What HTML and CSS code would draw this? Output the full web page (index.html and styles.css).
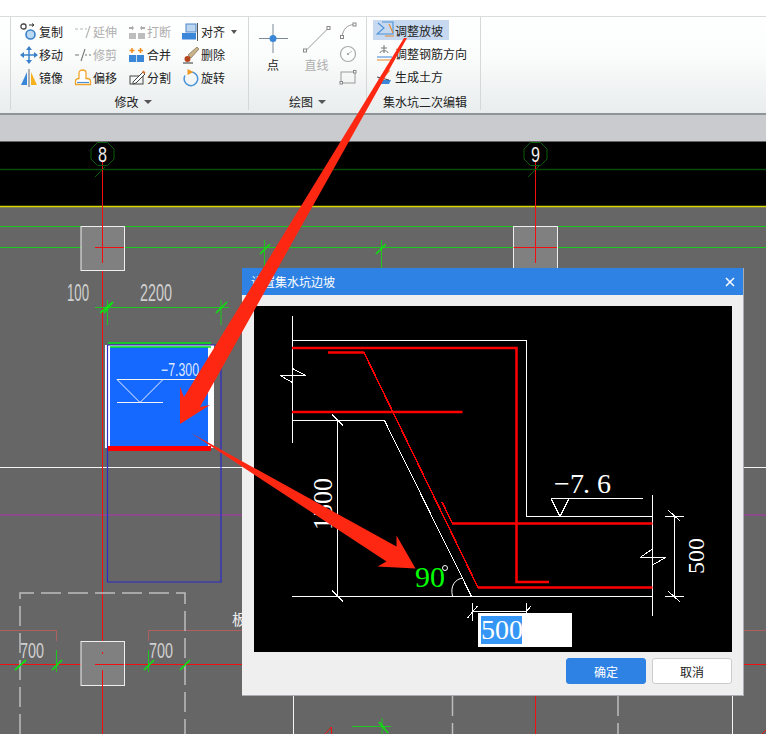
FILE: index.html
```html
<!DOCTYPE html>
<html lang="zh">
<head>
<meta charset="utf-8">
<title>设置集水坑边坡</title>
<link rel="stylesheet" href="styles.css">
</head>
<body>
<div class="app">
  <div class="topbar"></div>
  <div class="ribbon">
    <section class="group group-modify">
      <div class="tools">
        <div class="tool"><svg class="ico" viewBox="0 0 18 18"><rect x="1" y="1" width="5" height="5" rx="2" fill="none" stroke="#444" stroke-width="1.3"/><path d="M9 2h5M14 2l-2-1.500M14 2l-2 1.500" fill="none" stroke="#333"/><circle cx="10.500" cy="11.500" r="4.500" fill="#bcd9f2" stroke="#3a80c8" stroke-width="1.600"/></svg><span>复制</span></div>
        <div class="tool off"><svg class="ico" viewBox="0 0 18 18"><path d="M1 6h3M6 6h3M11 6h2M16 3l-4 12" fill="none" stroke="#b5b5b5" stroke-width="1.200"/></svg><span>延伸</span></div>
        <div class="tool off"><svg class="ico" viewBox="0 0 18 18"><rect x="1" y="10" width="7" height="6" fill="#bdbdbd"/><rect x="10" y="10" width="7" height="6" fill="#bdbdbd"/><path d="M1 5h3M14 5h3" stroke="#aaa" stroke-width="2"/><path d="M6 5L4 2.500v5zM12 5l2-2.500v5z" fill="#aaa"/></svg><span>打断</span></div>
        <div class="tool"><svg class="ico" viewBox="0 0 18 18"><rect x="4" y="1" width="10" height="8" fill="#bcd5f0" stroke="#4a86c6"/><rect x="0" y="10" width="14" height="6.500" fill="#3a86d8"/><path d="M15.500 0v18" stroke="#555"/></svg><span>对齐</span><i class="caret"></i></div>

        <div class="tool"><svg class="ico" viewBox="0 0 18 18"><path d="M9 3v12M3 9h12" stroke="#3c84cc" stroke-width="1.500"/><path d="M9 0l3 4H6zM9 18l3-4H6zM0 9l4-3v6zM18 9l-4-3v6z" fill="#3a80c8"/></svg><span>移动</span></div>
        <div class="tool off"><svg class="ico" viewBox="0 0 18 18"><path d="M1 9h4M7 15l4-12M11 9h2M15 9h2" fill="none" stroke="#777" stroke-width="1.100"/></svg><span>修剪</span></div>
        <div class="tool"><svg class="ico" viewBox="0 0 18 18"><rect x="1" y="9" width="15" height="7" fill="#3a86d8"/><path d="M8.500 9v7" stroke="#cde"/><path d="M4 2v5M1.500 4.500h5M12.500 2v5M10 4.500h5" stroke="#ee8c1c" stroke-width="1.500"/></svg><span>合并</span></div>
        <div class="tool"><svg class="ico" viewBox="0 0 18 18"><path d="M1 17h10" stroke="#333"/><path d="M6 9l9-8 2 2-8 9z" fill="#c9b48e" stroke="#6e5a3e" stroke-width=".6"/><circle cx="5.500" cy="13" r="3" fill="#b5451c"/></svg><span>删除</span></div>

        <div class="tool"><svg class="ico" viewBox="0 0 18 18"><path d="M7 3v13H1z" fill="#3a86d8"/><path d="M11 3v13h6z" fill="#f6b21e"/><path d="M9 0v18" stroke="#666"/></svg><span>镜像</span></div>
        <div class="tool"><svg class="ico" viewBox="0 0 18 18"><path d="M1.500 15.500v-3c0-2 1.500-3 3.500-3V4c0-4 7-4 7 0v5.500h1c2.500 0 3.500 1.500 3.500 3v3z" fill="#fff" stroke="#f0a52a" stroke-width="1.300"/><path d="M3 13.500h12" stroke="#4a90d8" stroke-width="1.200"/></svg><span>偏移</span></div>
        <div class="tool"><svg class="ico" viewBox="0 0 18 18"><rect x="2" y="7" width="13" height="8" fill="none" stroke="#444"/><path d="M5 13L15 3l2 2-9 9-3 1z" fill="#fff" stroke="#444"/><path d="M14 3l1.500-1.500 2 2L16 5z" fill="#e0762c"/></svg><span>分割</span></div>
        <div class="tool"><svg class="ico" viewBox="0 0 18 18"><path d="M9 3a6.800 6.800 0 1 1-6 3.500" fill="none" stroke="#4a92da" stroke-width="1.500"/><path d="M5.500 0v6l6-3z" fill="#f09a26"/></svg><span>旋转</span></div>
      </div>
      <div class="group-title">修改<i class="caret caret-title"></i></div>
    </section>

    <section class="group group-draw">
      <div class="draw-tools">
        <div class="draw-big">
          <svg class="big-ico" viewBox="0 0 30 30"><path d="M15 0v29M1 14.500h29" stroke="#7a8a96"/><circle cx="15" cy="14.500" r="3.500" fill="#3a86d8"/></svg>
          <span>点</span>
        </div>
        <div class="draw-big off">
          <svg class="big-ico" viewBox="0 0 30 30"><path d="M3.500 27L26.500 4" stroke="#9a9a9a"/><rect x="1.500" y="25" width="3" height="3" fill="#fff" stroke="#888"/><rect x="25" y="2.500" width="3" height="3" fill="#fff" stroke="#888"/></svg>
          <span>直线</span>
        </div>
        <div class="draw-small">
          <svg class="small-ico" viewBox="0 0 18 18"><path d="M3 15C4 7 8 3 15 2.500" fill="none" stroke="#999"/><rect x="1.500" y="13.500" width="3" height="3" fill="#fff" stroke="#888"/><rect x="14" y="1" width="3" height="3" fill="#fff" stroke="#888"/></svg>
          <svg class="small-ico" viewBox="0 0 18 18"><circle cx="9" cy="9" r="7.500" fill="none" stroke="#aaa" stroke-width="1.200"/><circle cx="9" cy="9" r="1" fill="#888"/><path d="M9 9l4-3" stroke="#bbb"/></svg>
          <svg class="small-ico" viewBox="0 0 18 18"><rect x="2" y="4" width="14" height="11" fill="none" stroke="#999"/><rect x="1" y="13.500" width="2.500" height="2.500" fill="#fff" stroke="#888"/><rect x="14.500" y="2.500" width="2.500" height="2.500" fill="#fff" stroke="#888"/></svg>
        </div>
      </div>
      <div class="group-title">绘图<i class="caret caret-title"></i></div>
    </section>

    <section class="group group-pit">
      <div class="pit-tools">
        <div class="pit-tool active"><svg class="ico" viewBox="0 0 18 18"><path d="M6 1h11v12H1l7-6-6-5" fill="none" stroke="#4a90d8" stroke-width="1.100"/><path d="M9 15h9M13 3l4 9" fill="none" stroke="#e88a2c" stroke-width="1.100"/></svg><span>调整放坡</span></div>
        <div class="pit-tool"><svg class="ico" viewBox="0 0 18 18"><path d="M8 1v8M5 4h6M4 9c0-3 8-3 8 0" fill="none" stroke="#777"/><path d="M1 13h15" stroke="#3a86d8"/><path d="M1 16h15" stroke="#e88a2c"/></svg><span>调整钢筋方向</span></div>
        <div class="pit-tool"><svg class="ico" viewBox="0 0 18 18"><path d="M12 1L4 11l2 2L14 4z" fill="#e8892a"/><path d="M2 11v2h13l-2 4H4z" fill="#3a86d8"/><path d="M1 10l12 3" stroke="#444"/></svg><span>生成土方</span></div>
      </div>
      <div class="group-title">集水坑二次编辑</div>
    </section>
  </div>
  <div class="band"></div>

  <main class="canvas">
    <svg class="cad" viewBox="0 141 766 593" width="766" height="593">
      <rect x="0" y="141" width="766" height="593" fill="#666"/>
      <rect x="0" y="142" width="766" height="64" fill="#000"/>
      <path class="dark-green thick" d="M0 169.500H766"/>
      <path class="yellow" d="M0 206.500H766"/>
      <path class="green" d="M0 226.500H766"/>
      <path class="green" d="M0 247.500H766"/>
      <path class="white-thin" d="M0 467.500H766"/>
      <path class="magenta" d="M0 515H766"/>
      <path class="brown" d="M0 630.500H56.500V641M148.500 641V630.500H766"/>
      <path class="red" d="M102.500 160V734M535.500 160V734M0 664.500H766"/>
      <path class="green" d="M264.500 240V268M381.500 240V268"/>
      <path class="slash" d="M260 254L270 244M376 254L386 244"/>

      <path class="dark-green" d="M97.500 142.500L107.500 142.500L114 149L114 159L107.500 165.500L97.500 165.500L91 159L91 149Z M95 177L105 167"/>
      <path class="dark-green" d="M530.500 142.500L540.500 142.500L547 149L547 159L540.500 165.500L530.500 165.500L524 159L524 149Z M528 177L539 166"/>
      <text class="axis" x="98" y="162" textLength="9" lengthAdjust="spacingAndGlyphs">8</text>
      <text class="axis" x="531" y="162" textLength="9" lengthAdjust="spacingAndGlyphs">9</text>

      <rect class="column" x="81" y="226.500" width="43.500" height="44"/>
      <rect class="column" x="513.500" y="226.500" width="44" height="44"/>
      <rect class="column" x="81" y="641.500" width="43.500" height="44"/>
      <path class="red" d="M95 247.500H124M102.500 226V263M513.500 247.500H557M535.500 226V263M95 664.500H124M102.500 670V686M102.500 652V654"/>

      <text class="dim" x="67" y="301" textLength="22" lengthAdjust="spacingAndGlyphs">100</text>
      <text class="dim" x="140" y="301" textLength="32" lengthAdjust="spacingAndGlyphs">2200</text>
      <path class="green" d="M95 307.500H229M107.500 300V325M221 300V325"/>
      <path class="slash" d="M100 313L113 302M104 313L113 302M216 313L227 302"/>

      <rect x="105" y="345" width="109" height="103" fill="#fff"/>
      <rect x="110" y="347" width="98" height="99" fill="#1569ff"/>
      <path class="navy" d="M107.500 345V582H221V345H108"/>
      <path class="lime" d="M108 343H211M110 347H211"/>
      <path d="M108 448.500H211" stroke="#f00" stroke-width="5"/>
      <text class="level" x="161" y="376" textLength="38" lengthAdjust="spacingAndGlyphs">−7.300</text>
      <path class="white-thin" d="M117 379.500H195M117 379.500L140 402.500L163 379.500M117 402.500H163"/>

      <path class="dash" d="M20 734V593H185V734"/>
      <text class="dim small" x="20" y="658" textLength="24" lengthAdjust="spacingAndGlyphs">700</text>
      <text class="dim small" x="149" y="658" textLength="24" lengthAdjust="spacingAndGlyphs">700</text>
      <path class="green" d="M56.500 650V672M148.500 650V672"/>
      <path class="slash" d="M15 670L26 660M52 670L62 660M144 670L154 660M180 670L190 660"/>
      <text class="note" x="232" y="625">板</text>

      <path class="white-thin" d="M293.500 696V734M732.500 696V734"/>
      <path class="dash" d="M618 696V734M452.500 696V734"/>
      <path class="green" d="M352 726.500H391M382 718V734"/>
      <path class="slash" d="M379 722L388 733"/>
      <path class="red" d="M325 734L331.500 727V734M762 734L766 730"/>
    </svg>

    <div class="dialog">
      <header class="dialog-title"><span>设置集水坑边坡</span>
        <svg class="close" viewBox="0 0 10 10"><path d="M1 1l8 8M9 1l-8 8" stroke="#fff" stroke-width="1.500"/></svg>
      </header>
      <div class="dialog-body">
        <div class="drawing">
          <svg class="detail" viewBox="254 306 478 346" width="478" height="346">
            <rect x="254" y="306" width="478" height="346" fill="#000"/>
            <path class="w" d="M292.500 316V443M292.500 340.500H526.500V516.500H652.500M280 375.500H305.500L292.500 368.500M280 375.500L292.500 382.500"/>
            <path class="w" d="M292.500 420.500H384.500L471.500 596.500M337.500 420.500V596.500M332 414.500L343 425.500M332 590.500L343 601.500M292 596.500H652.500"/>
            <path class="w" d="M551 498.500H642.500M551 498.500L560 516.500L569 498.500M652.500 495V616M640 557.500H665.500L652.500 565M640 557.500L652.500 549"/>
            <path class="w" d="M674.500 516.500V596.500M665 516.500H684M665 596.500H684M668 510L680 521M668 591L680 602"/>
            <path class="w" d="M472 603V621M526 603V616M472 611.500H526M467.500 618L477.500 606M526 612L531 606"/>
            <path class="w-soft" d="M452.500 596C450 586 455 579 463 578"/>
            <path class="r2" d="M292 348H516.500V582H549M292 412H462.500M328 352.500H364M478 587.500H652.500M452 523.500H652.500"/>
            <path class="r1" d="M364 352.500L478 587.500M442 502L452.500 523.500"/>
            <text class="serif-num" x="0" y="0" transform="translate(331.500 530) rotate(-90)" textLength="52" lengthAdjust="spacingAndGlyphs">1500</text>
            <text class="serif-num mid" x="0" y="0" transform="translate(704 574) rotate(-90)">500</text>
            <text class="serif-num big" x="554 570 583 597" y="492.500">−7.6</text>
            <text class="angle" x="415" y="586.500">90</text>
            <circle cx="445" cy="568" r="2.500" fill="none" stroke="#fff"/>
          </svg>
          <div class="slope-input"><span class="slope-value">500</span></div>
        </div>
        <div class="dialog-actions">
          <button class="btn primary">确定</button>
          <button class="btn">取消</button>
        </div>
      </div>
    </div>
  </main>

  <svg class="arrows" viewBox="0 0 766 734" width="766" height="734">
    <path d="M404 38H407L200 407L210 405L180 424V387L184 397Z" fill="#fe2712"/>
    <path d="M191 433L396.500 546.500V535.500L415.500 568.500L377.500 566.500L386.500 561.500Z" fill="#fe2712"/>
  </svg>
</div>
</body>
</html>
```
FILE: styles.css
```css
* { box-sizing: border-box; }
html, body { margin: 0; height: 100%; overflow: hidden; }
body { font-family: "Noto Sans CJK SC", "Liberation Sans", sans-serif; font-size: 12px; color: #222; }

.app { position: relative; width: 766px; height: 734px; display: flex; flex-direction: column; }
.topbar { height: 16px; background: #fff; flex: none; }

.ribbon {
  height: 99px; flex: none; display: flex; padding: 0 0 3px 10px;
  background: linear-gradient(#fff 0%, #fbfcfc 40%, #e9eded 100%);
  border-top: 1px solid #d9dcdc; border-bottom: 2px solid #8f9496;
}
.group { position: relative; display: flex; flex-direction: column; border-left: 1px solid #d4d8d8; }
.group-modify { width: 238px; padding: 3px 0 0 9px; }
.group-draw { width: 118px; padding-top: 3px; }
.group-pit { width: 115px; padding: 3px 0 0 6px; border-right: 1px solid #d4d8d8; }

.tools { display: grid; grid-template-columns: repeat(4, 54px); grid-auto-rows: 23px; height: 69px; }
.tool { display: flex; align-items: center; gap: 1px; white-space: nowrap; line-height: 16px; }
.off { color: #aeaeae; }
.ico { width: 18px; height: 18px; flex: none; }
.caret { display: block; width: 0; height: 0; margin-left: 5px; border: 3px solid transparent; border-top: 4px solid #555; border-bottom: 0; }
.group-title { height: 17px; margin-top: 5px; display: flex; align-items: center; justify-content: center; line-height: 16px; }
.group-modify .group-title { padding-right: 2px; }
.group-pit .group-title { padding-right: 3px; }
.caret-title { margin-left: 5px; border-width: 4px; border-top-width: 4px; }

.draw-tools { display: flex; height: 69px; padding-left: 2.500px; }
.draw-big { width: 43px; display: flex; flex-direction: column; align-items: center; gap: 3px; line-height: 16px; }
.draw-big.off { width: 44px; }
.big-ico { width: 30px; height: 30px; margin-top: 4px; }
.draw-small { display: flex; flex-direction: column; gap: 5px; padding-top: 2px; }
.small-ico { width: 18px; height: 18px; display: block; }

.pit-tools { display: flex; flex-direction: column; gap: 3px; height: 69px; }
.pit-tool { height: 20px; display: flex; align-items: center; gap: 1px; white-space: nowrap; padding-left: 3px; }
.pit-tool.active { width: 76px; background: #c6d9f0; }

.band { height: 26px; flex: none; background: #c9cbce; }

.canvas { position: relative; flex: 1; overflow: hidden; }
.cad { display: block; }
.cad path, .detail path { fill: none; }
.dark-green { stroke: #0a5c0a; stroke-width: 1; }
.thick { stroke: #0a4a0a; stroke-width: 1.500; }
.yellow { stroke: #d8d800; stroke-width: 1.500; }
.green { stroke: #1dc81d; stroke-width: 1; }
.slash { stroke: #10e010; stroke-width: 1.700; }
.red { stroke: #f01010; stroke-width: 1; }
.white-thin { stroke: #f4f4f4; stroke-width: 1; }
.magenta { stroke: #b030b0; stroke-width: 1; }
.brown { stroke: #b06060; stroke-width: 1; }
.navy { stroke: #2a2ac8; stroke-width: 1.200; }
.lime { stroke: #00e81a; stroke-width: 1.500; }
.dash { stroke: #bdbdbd; stroke-width: 1.500; stroke-dasharray: 20 7; }
.column { fill: #808080; stroke: #eee; stroke-width: 1; }
.axis { fill: #eee; font: 22px "Liberation Sans", sans-serif; }
.dim { fill: #d0d0d0; font: 23px "Liberation Sans", sans-serif; }
.dim.small { font-size: 22px; }
.level { fill: #dfe8ff; font: 18px "Liberation Sans", sans-serif; }
.note { fill: #eee; font: 15px "Noto Sans CJK SC", sans-serif; }

.dialog {
  position: absolute; left: 242px; top: 127px; width: 502px; height: 428px;
  background: #efefef; border-right: 1px solid #a9adb2; border-bottom: 1px solid #a9adb2;
}
.dialog-title { height: 27px; background: #2e82e3; color: #fff; display: flex; align-items: center; justify-content: space-between; padding: 0 9px; line-height: 16px; }
.close { width: 10px; height: 10px; margin-right: -1px; }
.dialog-body { padding: 11px 11px 0 12px; }
.drawing { position: relative; width: 478px; height: 346px; }
.detail { display: block; }
.w { stroke: #fff; stroke-width: 1; shape-rendering: crispEdges; }
.w-soft { stroke: #fff; stroke-width: 1; }
.r2 { stroke: #f00; stroke-width: 2.500; }
.r1 { stroke: #f00; stroke-width: 1.500; shape-rendering: crispEdges; }
.serif-num { fill: #fff; font: 27px "Liberation Serif", serif; }
.serif-num.mid { font-size: 24px; }
.serif-num.big { font-size: 28px; }
.angle { fill: #0f0; font: 30px "Liberation Serif", serif; }

.slope-input { position: absolute; left: 224px; top: 307px; width: 94px; height: 34px; background: #fff; padding: 3px 0 0 3px; }
.slope-value { display: block; width: 41px; height: 28px; background: #3596f5; color: #fff; font: 28px/28px "Liberation Serif", serif; }

.dialog-actions { display: flex; justify-content: flex-end; gap: 6px; padding-top: 6px; }
.btn { width: 80px; height: 26px; padding: 0; border-radius: 3px; border: 1px solid #ccc; background: #fff; color: #222; font: 12px "Noto Sans CJK SC", sans-serif; }
.btn.primary { background: #2e82e3; border-color: #2e82e3; color: #fff; }

.arrows { position: absolute; left: 0; top: 0; pointer-events: none; }
```
